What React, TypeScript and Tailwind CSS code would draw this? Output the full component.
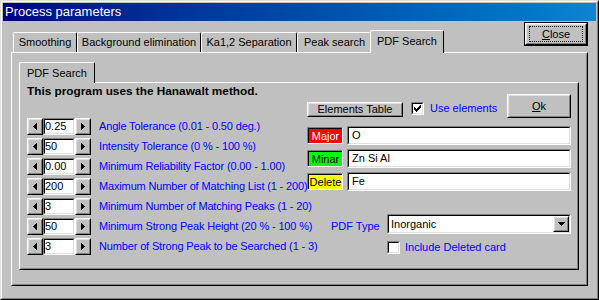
import React from 'react';

const FONT = "font-['Liberation_Sans',Arial,sans-serif]";

function Raised({ className = '', children }: { className?: string; children?: React.ReactNode }) {
  return (
    <div className={`shrink-0 border border-t-white border-l-white border-r-black border-b-black bg-[#c0c0c0] ${className}`}>
      <div className="flex h-full w-full items-center justify-center border border-t-[#dfdfdf] border-l-[#dfdfdf] border-r-[#808080] border-b-[#808080]">
        {children}
      </div>
    </div>
  );
}

function Sunken({ className = '', children }: { className?: string; children?: React.ReactNode }) {
  return (
    <div className={`shrink-0 border border-t-[#808080] border-l-[#808080] border-r-white border-b-white ${className}`}>
      <div className="flex h-full w-full items-center border border-t-black border-l-black border-r-[#dfdfdf] border-b-[#dfdfdf] bg-white">
        {children}
      </div>
    </div>
  );
}

function ArrowLeft() {
  return (
    <svg width="4" height="7" shapeRendering="crispEdges">
      <rect x="0" y="3" width="1" height="1" />
      <rect x="1" y="2" width="1" height="3" />
      <rect x="2" y="1" width="1" height="5" />
      <rect x="3" y="0" width="1" height="7" />
    </svg>
  );
}

function ArrowRight() {
  return (
    <svg width="4" height="7" shapeRendering="crispEdges">
      <rect x="3" y="3" width="1" height="1" />
      <rect x="2" y="2" width="1" height="3" />
      <rect x="1" y="1" width="1" height="5" />
      <rect x="0" y="0" width="1" height="7" />
    </svg>
  );
}

function ArrowDown() {
  return (
    <svg width="7" height="4" shapeRendering="crispEdges">
      <rect x="0" y="0" width="7" height="1" />
      <rect x="1" y="1" width="5" height="1" />
      <rect x="2" y="2" width="3" height="1" />
      <rect x="3" y="3" width="1" height="1" />
    </svg>
  );
}

function Check() {
  // classic 7x7 tick
  const rows = ['......#', '.....##', '#...###', '##.###.', '#####..', '.###...', '..#....'];
  return (
    <svg width="7" height="7" shapeRendering="crispEdges">
      {rows.flatMap((r, y) =>
        r.split('').map((c, x) => (c === '#' ? <rect key={`${x}-${y}`} x={x} y={y} width="1" height="1" /> : null))
      )}
    </svg>
  );
}

function CheckBox({ checked, className = '' }: { checked?: boolean; className?: string }) {
  return (
    <Sunken className={`h-[13px] w-[13px] ${className}`}>
      <div className="flex h-full w-full items-center justify-center">{checked && <Check />}</div>
    </Sunken>
  );
}

const params = [
  { value: '0.25', label: 'Angle Tolerance (0.01 - 0.50 deg.)' },
  { value: '50', label: 'Intensity Tolerance (0 % - 100 %)' },
  { value: '0.00', label: 'Minimum Reliability Factor (0.00 - 1.00)' },
  { value: '200', label: 'Maximum Number of Matching List (1 - 200)' },
  { value: '3', label: 'Minimum Number of Matching Peaks (1 - 20)' },
  { value: '50', label: 'Minimum Strong Peak Height (20 % - 100 %)' },
  { value: '3', label: 'Number of Strong Peak to be Searched (1 - 3)' },
];

function SpinRow({ value, label }: { value: string; label: string }) {
  return (
    <div className="flex h-[17px] items-center">
      <Raised className="h-[17px] w-[16px]">
        <ArrowLeft />
      </Raised>
      <Sunken className="h-[17px] w-[32px]">
        <span className="leading-none">{value}</span>
      </Sunken>
      <Raised className="h-[17px] w-[16px]">
        <ArrowRight />
      </Raised>
      <span className="ml-[8px] whitespace-nowrap tracking-[-0.15px] text-[#0000ff]">{label}</span>
    </div>
  );
}

const elementRows = [
  { name: 'Major', box: 'bg-[#ff0000] text-white', value: 'O' },
  { name: 'Minar', box: 'bg-[#00ff00] text-black', value: 'Zn Si Al' },
  { name: 'Delete', box: 'bg-[#ffff00] text-black', value: 'Fe' },
];

function Tab({ label, width }: { label: string; width: string }) {
  return (
    <div className={`flex h-[20px] shrink-0 items-center justify-center rounded-tl-[2px] rounded-tr-[2px] border-t border-l border-r border-t-white border-l-white border-r-black ${width}`}>
      <span className="whitespace-nowrap">{label}</span>
    </div>
  );
}

export default function App() {
  return (
    <div className={`h-[300px] w-[599px] overflow-hidden bg-[#c0c0c0] text-[11px] text-black ${FONT}`}>
      <div className="h-full w-full border border-t-[#dfdfdf] border-l-[#dfdfdf] border-r-black border-b-black">
        <div className="flex h-full w-full flex-col border border-t-white border-l-white border-r-[#808080] border-b-[#808080] p-[1px]">
          {/* Title bar */}
          <div className="flex h-[18px] items-center bg-linear-to-r from-[#000080] to-[#1084d0] pl-[2px] text-[13px] text-white">
            Process parameters
          </div>

          <div className="px-[8px]">
            {/* Tab strip + Close */}
            <div className="flex h-[31px] items-end pl-[2px]">
              <Tab label="Smoothing" width="w-[64px]" />
              <Tab label="Background elimination" width="w-[124px]" />
              <Tab label="Ka1,2 Separation" width="w-[96px]" />
              <Tab label="Peak search" width="w-[75px]" />
              <div className="relative z-10 -mb-px -ml-[2px] flex h-[23px] w-[74px] shrink-0 items-center justify-center rounded-tl-[2px] rounded-tr-[2px] border-t border-l border-r border-t-white border-l-white border-r-black bg-[#c0c0c0] pb-[2px]">
                PDF Search
              </div>
              <div className="mt-[1px] ml-auto self-start border border-black">
                <Raised className="h-[22px] w-[62px]">
                  <div className="m-[1px] flex h-[16px] w-[54px] items-center justify-center border border-dotted border-black">
                    <span>
                      <span className="underline">C</span>lose
                    </span>
                  </div>
                </Raised>
              </div>
            </div>

            {/* Outer panel */}
            <div className="h-[234px] border border-t-white border-l-white border-r-black border-b-black">
              <div className="h-full border border-t-transparent border-l-transparent border-r-[#808080] border-b-[#808080] pt-[8px] pl-[6px]">
                <div className="flex h-[20px] items-end">
                  <div className="relative z-10 -mb-px flex h-[21px] w-[76px] items-center justify-center rounded-tl-[2px] rounded-tr-[2px] border-t border-l border-r border-t-white border-l-white border-r-black bg-[#c0c0c0]">
                    PDF Search
                  </div>
                </div>

                {/* Inner panel */}
                <div className="h-[188px] w-[560px] border border-t-white border-l-white border-r-black border-b-black">
                  <div className="flex h-full border border-t-transparent border-l-transparent border-r-[#808080] border-b-[#808080]">
                    {/* Left column */}
                    <div className="w-[286px] shrink-0 pl-[6px]">
                      <div className="h-[14px] whitespace-nowrap text-[11.8px] leading-[14px] font-bold">
                        This program uses the Hanawalt method.
                      </div>
                      <div className="mt-[20px] flex flex-col gap-[3px]">
                        {params.map((p) => (
                          <SpinRow key={p.label} value={p.value} label={p.label} />
                        ))}
                      </div>
                    </div>

                    {/* Right column */}
                    <div className="mt-[10px] w-[264px] shrink-0">
                      <div className="flex h-[24px] items-end">
                        <Raised className="mb-[1px] h-[15px] w-[96px]">
                          <span className="leading-none">Elements Table</span>
                        </Raised>
                        <CheckBox checked className="mb-[3px] ml-[8px]" />
                        <span className="mb-[2px] ml-[6px] text-[#0000ff]">Use elements</span>
                        <Raised className="ml-auto h-[24px] w-[64px]">
                          <span>
                            <span className="underline">O</span>k
                          </span>
                        </Raised>
                      </div>

                      <div className="mt-[8px] flex flex-col gap-[4px]">
                        {elementRows.map((r) => (
                          <div key={r.name} className="flex h-[19px] items-center">
                            <div className="h-[17px] w-[36px] shrink-0 border border-t-[#808080] border-l-[#808080] border-r-white border-b-white">
                              <div className={`flex h-full w-full items-center justify-center border-t border-l border-black leading-none ${r.box}`}>
                                {r.name}
                              </div>
                            </div>
                            <Sunken className="ml-[4px] h-[19px] w-[224px]">
                              <span className="pl-[3px]">{r.value}</span>
                            </Sunken>
                          </div>
                        ))}
                      </div>

                      <div className="mt-[23px] flex h-[20px] items-center">
                        <span className="mt-[4px] ml-[24px] w-[56px] shrink-0 text-[#0000ff]">PDF Type</span>
                        <Sunken className="h-[20px] w-[184px]">
                          <span className="pl-[2px]">Inorganic</span>
                          <Raised className="ml-auto h-[16px] w-[16px]">
                            <ArrowDown />
                          </Raised>
                        </Sunken>
                      </div>

                      <div className="mt-[5px] ml-[80px] flex items-center">
                        <CheckBox />
                        <span className="ml-[5px] text-[#0000ff]">Include Deleted card</span>
                      </div>
                    </div>
                  </div>
                </div>
              </div>
            </div>
          </div>
        </div>
      </div>
    </div>
  );
}
